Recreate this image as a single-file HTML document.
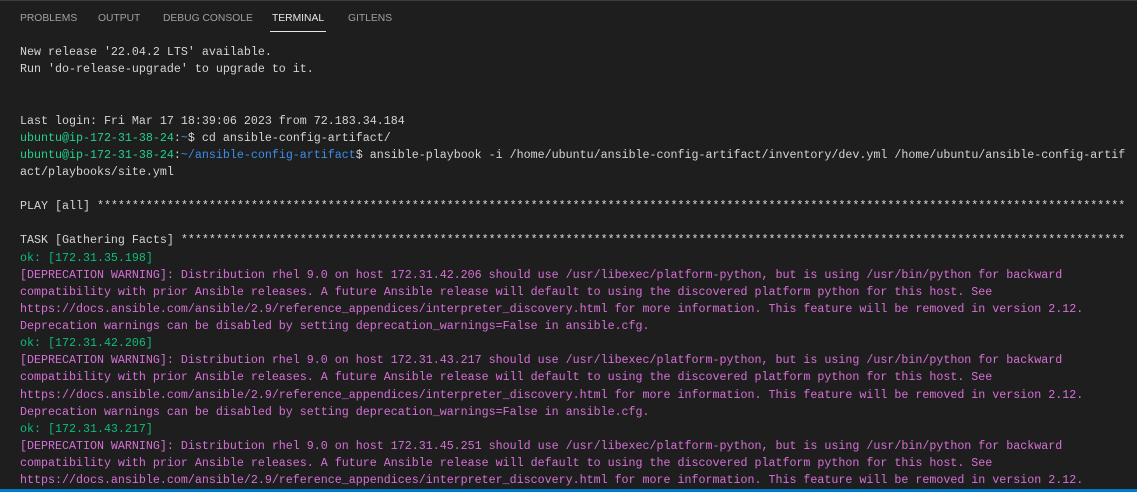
<!DOCTYPE html>
<html><head><style>
body{margin:0;width:1137px;height:492px;background:#1e1e1e;overflow:hidden;position:relative;font-family:"Liberation Sans",sans-serif}
.top{position:absolute;top:0;left:0;width:1137px;height:1px;background:#3c3c3c}
.tab{position:absolute;top:13px;font-size:10.3px;color:#a0a0a0;letter-spacing:0}
.act{color:#e7e7e7}
.ul{position:absolute;left:270px;top:31px;width:56px;height:1px;background:#e7e7e7}
pre{position:absolute;left:20px;top:44px;margin:0;font-family:"Liberation Mono",monospace;font-size:11.67px;line-height:17.12px;color:#d4d4d4}
.g{color:#23d18b}.b{color:#3b8eea}.ok{color:#0dbc79}.m{color:#d670d6}
.bar{position:absolute;left:0;top:489px;width:1137px;height:3px;background:#007acc}
</style></head><body>
<div class="top"></div>
<div class="tab" style="left:20px">PROBLEMS</div>
<div class="tab" style="left:98px">OUTPUT</div>
<div class="tab" style="left:163px">DEBUG CONSOLE</div>
<div class="tab act" style="left:272px">TERMINAL</div>
<div class="tab" style="left:348px">GITLENS</div>
<div class="ul"></div>
<pre>New release '22.04.2 LTS' available.
Run 'do-release-upgrade' to upgrade to it.


Last login: Fri Mar 17 18:39:06 2023 from 72.183.34.184
<span class="g">ubuntu@ip-172-31-38-24</span>:<span class="b">~</span>$ cd ansible-config-artifact/
<span class="g">ubuntu@ip-172-31-38-24</span>:<span class="b">~/ansible-config-artifact</span>$ ansible-playbook -i /home/ubuntu/ansible-config-artifact/inventory/dev.yml /home/ubuntu/ansible-config-artif
act/playbooks/site.yml

PLAY [all] ***************************************************************************************************************************************************

TASK [Gathering Facts] ***************************************************************************************************************************************
<span class="ok">ok: [172.31.35.198]</span>
<span class="m">[DEPRECATION WARNING]: Distribution rhel 9.0 on host 172.31.42.206 should use /usr/libexec/platform-python, but is using /usr/bin/python for backward
compatibility with prior Ansible releases. A future Ansible release will default to using the discovered platform python for this host. See
https://docs.ansible.com/ansible/2.9/reference_appendices/interpreter_discovery.html for more information. This feature will be removed in version 2.12.
Deprecation warnings can be disabled by setting deprecation_warnings=False in ansible.cfg.</span>
<span class="ok">ok: [172.31.42.206]</span>
<span class="m">[DEPRECATION WARNING]: Distribution rhel 9.0 on host 172.31.43.217 should use /usr/libexec/platform-python, but is using /usr/bin/python for backward
compatibility with prior Ansible releases. A future Ansible release will default to using the discovered platform python for this host. See
https://docs.ansible.com/ansible/2.9/reference_appendices/interpreter_discovery.html for more information. This feature will be removed in version 2.12.
Deprecation warnings can be disabled by setting deprecation_warnings=False in ansible.cfg.</span>
<span class="ok">ok: [172.31.43.217]</span>
<span class="m">[DEPRECATION WARNING]: Distribution rhel 9.0 on host 172.31.45.251 should use /usr/libexec/platform-python, but is using /usr/bin/python for backward
compatibility with prior Ansible releases. A future Ansible release will default to using the discovered platform python for this host. See
https://docs.ansible.com/ansible/2.9/reference_appendices/interpreter_discovery.html for more information. This feature will be removed in version 2.12.</span>
</pre>
<div class="bar"></div>
</body></html>
